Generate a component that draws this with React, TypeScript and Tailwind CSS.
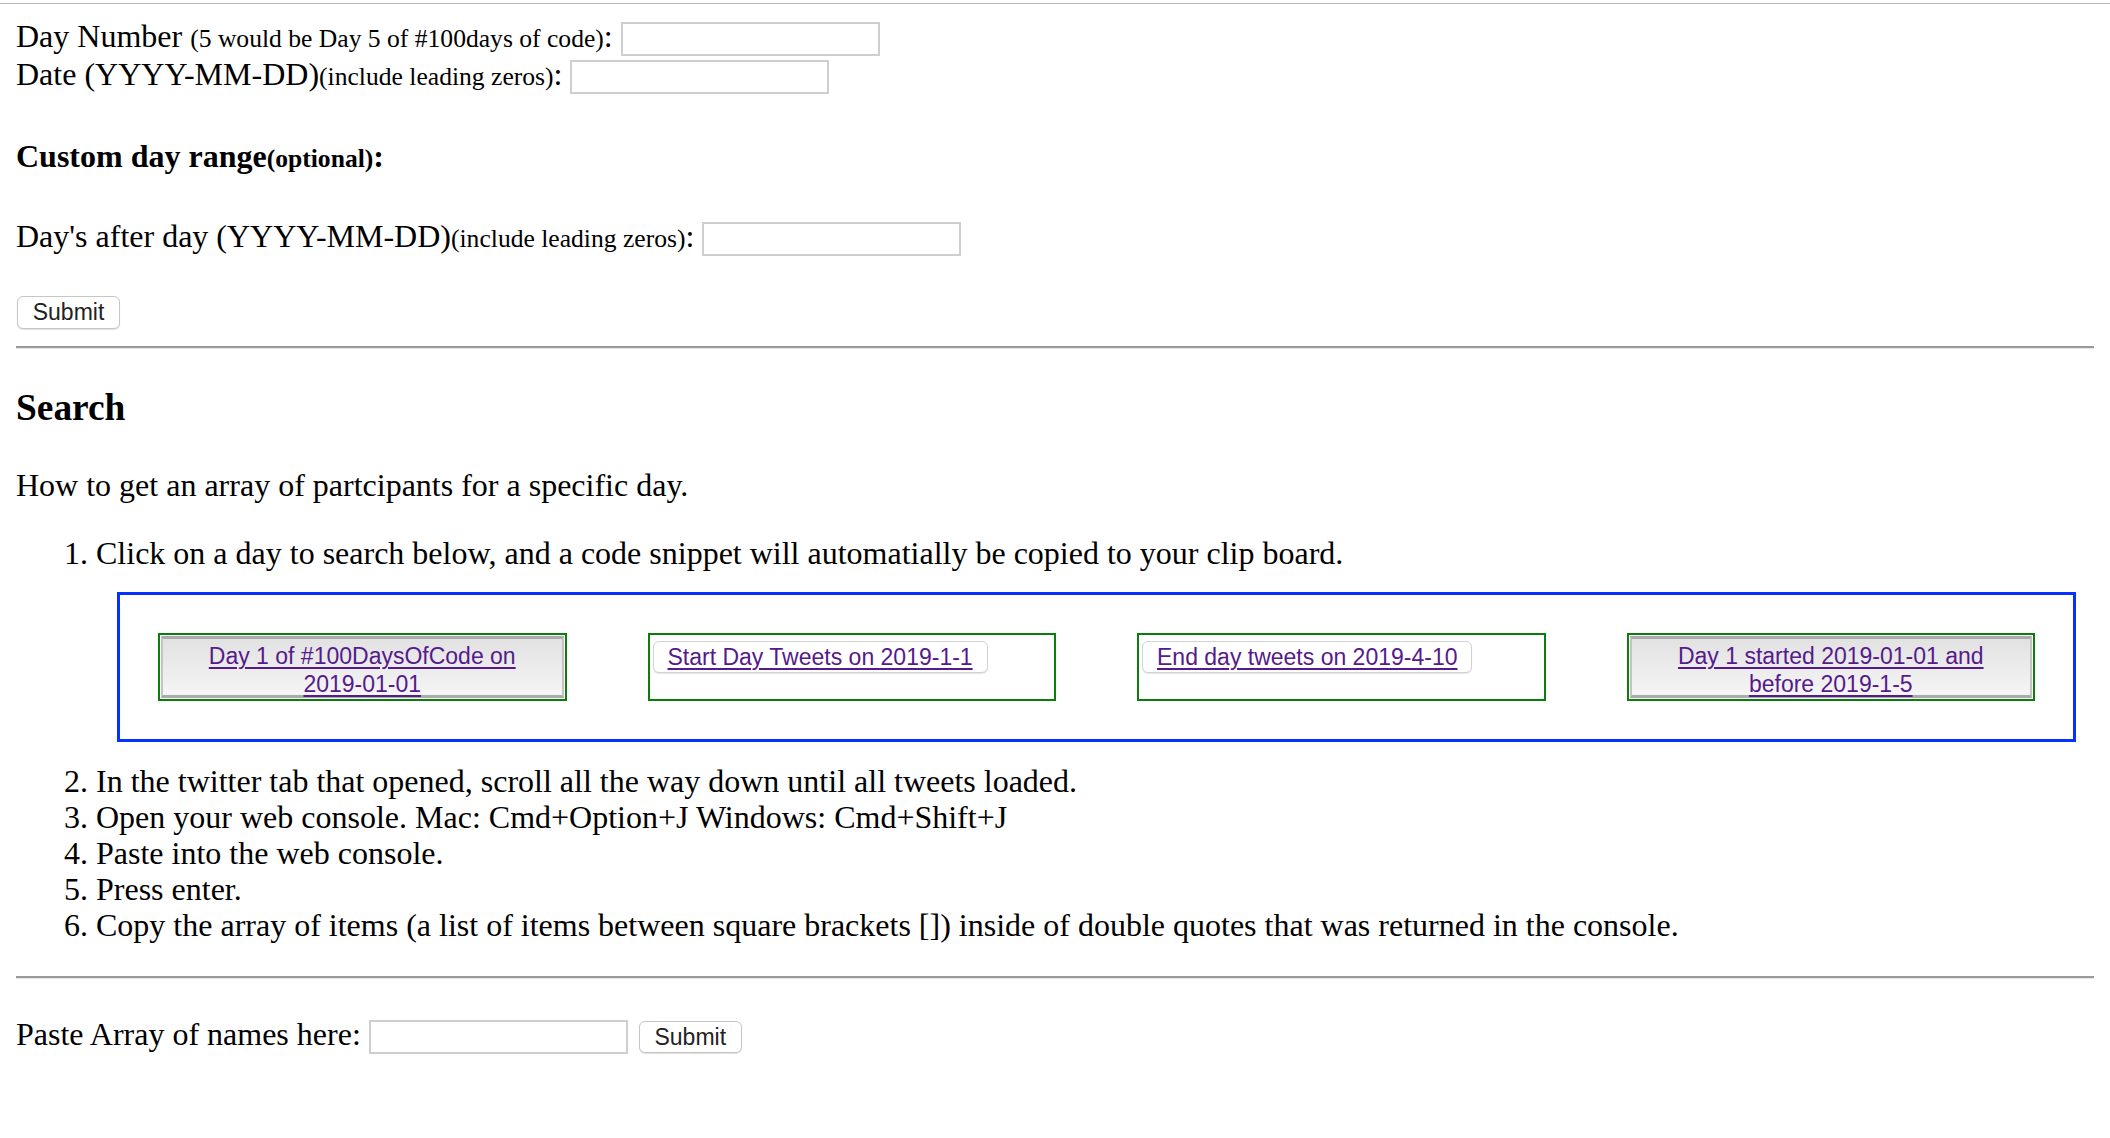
function Field({ className = "" }: { className?: string }) {
  return (
    <input
      type="text"
      className={"h-[34px] w-[259px] shrink-0 border-2 border-[#cfcfcf] bg-white outline-none " + className}
    />
  );
}

function SubmitButton({ className = "" }: { className?: string }) {
  return (
    <button
      className={
        "flex w-[103px] shrink-0 items-center justify-center rounded-[6px] border border-[#c6c6c6] bg-white font-['Liberation_Sans',Arial,sans-serif] text-[23px] leading-none text-[#222] shadow-[0_1px_1px_rgba(0,0,0,0.12)] " +
        className
      }
    >
      Submit
    </button>
  );
}

const linkText =
  "font-['Liberation_Sans',Arial,sans-serif] text-[23px] text-[#551a8b] underline decoration-2 underline-offset-[3px]";

// full-size grey button filling the green box
function WideButton({ children }: { children: React.ReactNode }) {
  return (
    <div className="h-full border-x-2 border-y-[3px] border-x-[#c4c4c4] border-y-[#ababab] bg-gradient-to-b from-[#e2e2e2] to-[#f5f5f5] px-[24px] pt-[2px] text-center leading-[25px]">
      <a href="#" className={linkText}>
        {children}
      </a>
    </div>
  );
}

// small rounded button sitting top-left in the green box
function SmallButton({ children }: { children: React.ReactNode }) {
  return (
    <div className="mt-[2px] ml-[2px] inline-flex h-[32px] items-center rounded-[6px] border border-[#d2d2d2] bg-white px-[14px] shadow-[0_1px_1px_rgba(0,0,0,0.1)]">
      <a href="#" className={linkText + " leading-[26px]"}>
        {children}
      </a>
    </div>
  );
}

function GreenBox({ children }: { children: React.ReactNode }) {
  return <div className="h-[68px] border-2 border-[#0a7d0a] p-px">{children}</div>;
}

export default function App() {
  return (
    <div className="min-h-screen bg-white font-['Liberation_Serif','Times_New_Roman',serif] text-[32px] text-black">
      <div className="pt-[3px]">
        <div className="h-px bg-[#bcbcbc]" />
      </div>

      <div className="px-4">
        <div className="mt-[16px] flex h-[38px] items-start">
          <span className="whitespace-pre leading-[32px]">
            Day Number <span className="text-[25.6px]">(5 would be Day 5 of #100days of code)</span>:
          </span>
          <Field className="mt-[2px] ml-2" />
        </div>
        <div className="flex h-[38px] items-start">
          <span className="whitespace-pre leading-[32px]">
            Date (YYYY-MM-DD)<span className="text-[25.6px]">(include leading zeros)</span>:
          </span>
          <Field className="mt-[2px] ml-2" />
        </div>

        <h4 className="mt-[44px] font-bold leading-[32px]">
          Custom day range<span className="text-[25.6px]">(optional)</span>:
        </h4>

        <div className="mt-[45px] flex h-[38px] items-start">
          <span className="whitespace-pre leading-[32px]">
            Day's after day (YYYY-MM-DD)<span className="text-[25.6px]">(include leading zeros)</span>:
          </span>
          <Field className="mt-[2px] ml-2" />
        </div>

        <SubmitButton className="mt-[38px] ml-px h-[33px]" />

        <div className="mt-[17px] border-t-2 border-b border-t-[#9a9a9a] border-b-[#e6e6e6]" />

        <h3 className="mt-[39px] text-[37.4px] font-bold leading-[40px]">Search</h3>

        <p className="mt-[41px] leading-[32px]">How to get an array of partcipants for a specific day.</p>

        <ol className="mt-[34px] leading-[36px]">
          <li className="flex">
            <span className="w-[80px] shrink-0 pr-2 text-right">1.</span>
            <div className="flex-1">
              <div>Click on a day to search below, and a code snippet will automatially be copied to your clip board.</div>
              <div className="mt-[21px] mr-[18px] ml-[21px] border-[3px] border-[#0433ff] px-[38px] pt-[38px] pb-[38px]">
                <div className="grid grid-cols-4 gap-x-[81px]">
                  <GreenBox>
                    <WideButton>Day 1 of #100DaysOfCode on 2019-01-01</WideButton>
                  </GreenBox>
                  <GreenBox>
                    <SmallButton>Start Day Tweets on 2019-1-1</SmallButton>
                  </GreenBox>
                  <GreenBox>
                    <SmallButton>End day tweets on 2019-4-10</SmallButton>
                  </GreenBox>
                  <GreenBox>
                    <WideButton>Day 1 started 2019-01-01 and before 2019-1-5</WideButton>
                  </GreenBox>
                </div>
              </div>
            </div>
          </li>
          <li className="mt-[21px] flex">
            <span className="w-[80px] shrink-0 pr-2 text-right">2.</span>
            <div className="flex-1">In the twitter tab that opened, scroll all the way down until all tweets loaded.</div>
          </li>
          <li className="flex">
            <span className="w-[80px] shrink-0 pr-2 text-right">3.</span>
            <div className="flex-1">Open your web console. Mac: Cmd+Option+J Windows: Cmd+Shift+J</div>
          </li>
          <li className="flex">
            <span className="w-[80px] shrink-0 pr-2 text-right">4.</span>
            <div className="flex-1">Paste into the web console.</div>
          </li>
          <li className="flex">
            <span className="w-[80px] shrink-0 pr-2 text-right">5.</span>
            <div className="flex-1">Press enter.</div>
          </li>
          <li className="flex">
            <span className="w-[80px] shrink-0 pr-2 text-right">6.</span>
            <div className="flex-1">
              Copy the array of items (a list of items between square brackets []) inside of double quotes that was returned in the console.
            </div>
          </li>
        </ol>

        <div className="mt-[33px] border-t-2 border-b border-t-[#9a9a9a] border-b-[#e6e6e6]" />

        <div className="mt-[39px] flex h-[38px] items-start">
          <span className="whitespace-pre leading-[32px]">Paste Array of names here:</span>
          <Field className="mt-[2px] ml-2" />
          <SubmitButton className="mt-[3px] ml-[11px] h-[32px]" />
        </div>
      </div>
    </div>
  );
}
